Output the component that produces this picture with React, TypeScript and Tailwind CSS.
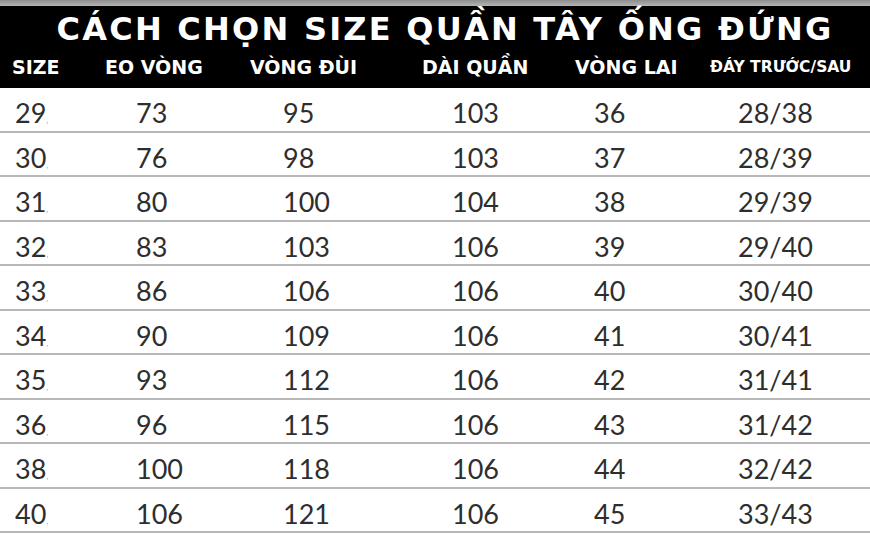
const headers = ['SIZE', 'EO VÒNG', 'VÒNG ĐÙI', 'DÀI QUẦN', 'VÒNG LAI', 'ĐÁY TRƯỚC/SAU'];

const rows: string[][] = [
  ['29', '73', '95', '103', '36', '28/38'],
  ['30', '76', '98', '103', '37', '28/39'],
  ['31', '80', '100', '104', '38', '29/39'],
  ['32', '83', '103', '106', '39', '29/40'],
  ['33', '86', '106', '106', '40', '30/40'],
  ['34', '90', '109', '106', '41', '30/41'],
  ['35', '93', '112', '106', '42', '31/41'],
  ['36', '96', '115', '106', '43', '31/42'],
  ['38', '100', '118', '106', '44', '32/42'],
  ['40', '106', '121', '106', '45', '33/43'],
];

export default function App() {
  return (
    <div className="w-[870px] h-[550px] bg-white overflow-hidden">
      <div className="h-[6px] bg-gradient-to-b from-[#8e8e8e] to-[#b4b4b4]" />

      <div className="h-[82px] bg-black text-white font-['DejaVu_Sans',sans-serif] font-bold">
        <h1 className="pt-[4px] pl-[20px] text-center text-[32px] leading-[38px] tracking-[0.07em]">
          CÁCH CHỌN SIZE QUẦN TÂY ỐNG ĐỨNG
        </h1>
        <div className="mt-[7px] pl-[12px] grid grid-cols-[93px_145px_172px_153px_135px_1fr] items-center text-[19px] leading-[24px]">
          {headers.map((h, i) => (
            <span key={h} className={i === 5 ? 'text-[15.5px]' : ''}>
              {h}
            </span>
          ))}
        </div>
      </div>

      <div className="font-['Lato',sans-serif] text-[#2e2e2e] text-[27px]">
        {rows.map((r) => (
          <div
            key={r[0]}
            className="h-[44.5px] border-b-2 border-[#b8b8b8] pl-[15px] pt-[9px] grid grid-cols-[121px_147px_169px_142px_144px_1fr] items-baseline leading-[32px]"
          >
            {r.map((v, i) => (
              <span key={i}>
                {v}
                {i === 0 && <span className="text-[9px] text-[#b0b0b0]">,</span>}
              </span>
            ))}
          </div>
        ))}
      </div>
    </div>
  );
}
